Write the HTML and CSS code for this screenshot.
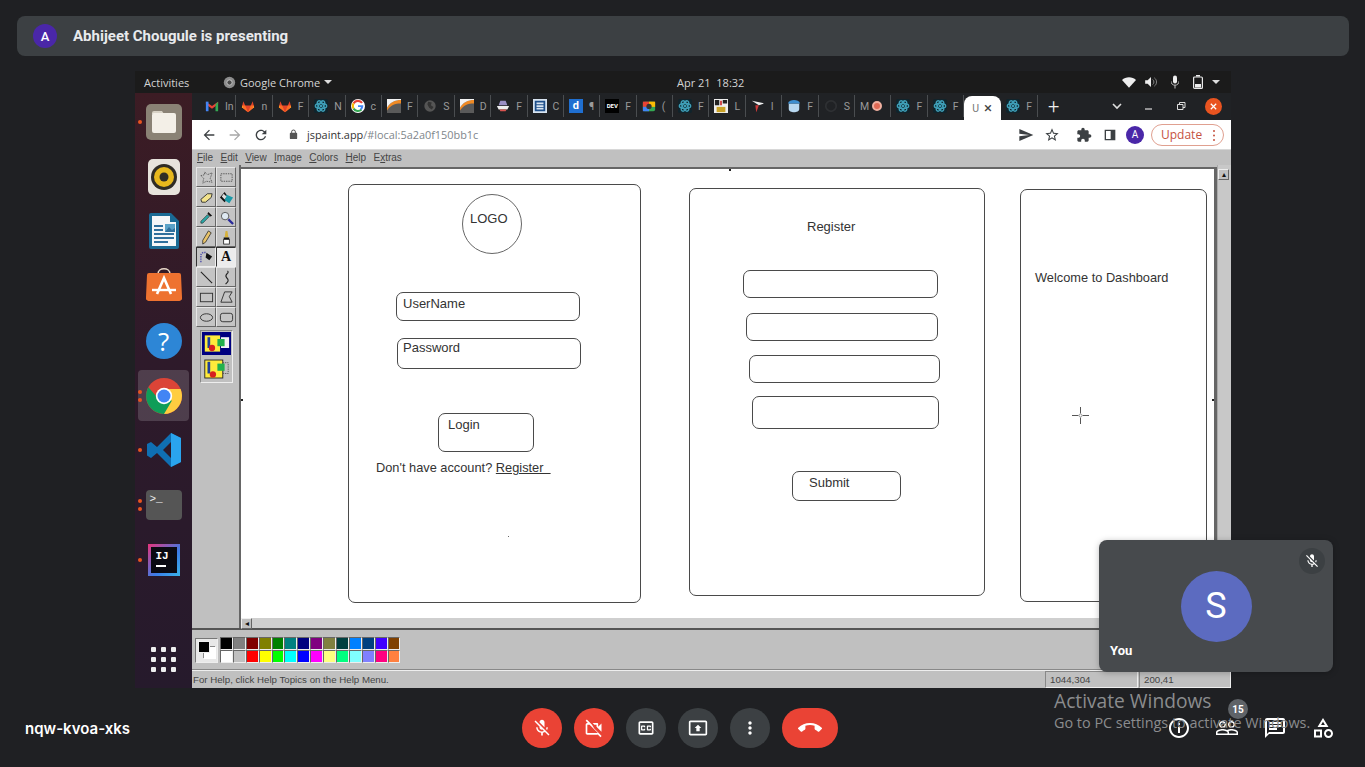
FILE: index.html
```html
<!DOCTYPE html>
<html lang="en">
<head>
<meta charset="utf-8">
<title>Meet</title>
<link rel="stylesheet" href="styles.css">
</head>
<body>
<svg class="sprite" aria-hidden="true">
  <symbol id="i-mic-off" viewBox="0 0 24 24"><path d="M19 11h-1.7c0 .74-.16 1.43-.43 2.05l1.23 1.23c.56-.98.9-2.09.9-3.28zm-4.02.17c0-.06.02-.11.02-.17V5c0-1.66-1.34-3-3-3S9 3.34 9 5v.18l5.98 5.99zM4.27 3L3 4.27l6.01 6.01V11c0 1.66 1.33 3 2.99 3 .22 0 .44-.03.65-.08l1.66 1.66c-.71.33-1.5.52-2.31.52-2.76 0-5.3-2.1-5.3-5.1H5c0 3.41 2.72 6.23 6 6.72V21h2v-3.28c.91-.13 1.77-.45 2.54-.9L19.73 21 21 19.73 4.27 3z"/></symbol>
  <symbol id="i-atom" viewBox="0 0 16 16"><rect width="16" height="16" rx="2" fill="#10242c"/><g fill="none" stroke="#3f9fb8" stroke-width="1.600"><ellipse cx="8" cy="8" rx="6.500" ry="2.800"/><ellipse cx="8" cy="8" rx="6.500" ry="2.800" transform="rotate(60 8 8)"/><ellipse cx="8" cy="8" rx="6.500" ry="2.800" transform="rotate(120 8 8)"/></g><circle cx="8" cy="8" r="1.400" fill="#3f9fb8"/></symbol>
  <symbol id="i-gitlab" viewBox="0 0 16 16"><path fill="#e24329" d="M8 15L1 9.500l1.600-7 2.200 5h6.400l2.200-5 1.600 7z"/><path fill="#fc6d26" d="M8 15L4.800 7.500H1.300L1 9.500zM8 15l3.200-7.500h3.500l.3 2z"/><path fill="#fca326" d="M1.300 7.500L1 9.500l2 1.600zM14.700 7.500l.3 2-2 1.600z"/></symbol>
  <symbol id="i-pen" viewBox="0 0 16 16"><rect width="16" height="16" fill="#5a5a5a"/><path fill="#f08a24" d="M0 10C3 4 9 1 16 1v4C9 5 4 7 0 13z"/><path fill="#f3f3f3" d="M0 0h16v1C9 1 3 4 0 10z"/></symbol>
</svg>

<div class="meet">
  <header class="banner">
    <span class="banner-avatar">A</span>
    <span class="banner-text">Abhijeet Chougule is presenting</span>
  </header>

  <main class="stage">
    <section class="desktop">
      <div class="topbar">
        <div class="topbar-left">
          <span class="activities">Activities</span>
          <svg class="tb-chrome" viewBox="0 0 16 16"><circle cx="8" cy="8" r="7" fill="#8d8d8d"/><circle cx="8" cy="8" r="3.200" fill="#4a4a4a" stroke="#d0d0d0"/></svg>
          <span class="appname">Google Chrome</span>
          <span class="caret"></span>
        </div>
        <div class="clock">Apr 21&nbsp;&nbsp;18:32</div>
        <div class="tray">
          <svg class="tray-wifi" viewBox="0 0 16 12"><path d="M0 3C4-1 12-1 16 3l-8 9z"/></svg>
          <svg class="tray-vol" viewBox="0 0 14 12"><path d="M0 4h3l4-4v12L3 8H0z"/><path d="M9 3c2 1.500 2 4.500 0 6M11 1c3.500 2.500 3.500 7.500 0 10" fill="none" stroke="#999"/></svg>
          <svg class="tray-mic" viewBox="0 0 10 16"><rect x="2.500" width="5" height="10" rx="2.500"/><path d="M0 7c0 3 2 5 5 5s5-2 5-5" fill="none" stroke="#ddd"/><path d="M4.500 12h1v4h-1z"/></svg>
          <svg class="tray-bat" viewBox="0 0 10 14"><path d="M3 0h4v1.500H3z"/><rect x=".6" y="2" width="8.800" height="11.400" fill="none" stroke="#e8e8e8" stroke-width="1.200" rx="1"/><rect x="2" y="9" width="6" height="3.500"/></svg>
          <span class="caret"></span>
        </div>
      </div>

      <div class="desk-body">
        <nav class="dock">
          <div class="dock-slot slot-files"><span class="pip"></span>
            <svg class="d-files" viewBox="0 0 36 36"><rect width="36" height="36" rx="5" fill="#8a8275"/><path fill="#d8d2c6" d="M6 9a2 2 0 0 1 2-2h8l2 3h-12z"/><rect x="6" y="9" width="24" height="20" rx="2" fill="#f3efe7"/></svg>
          </div>
          <div class="dock-slot slot-rhythm">
            <svg class="d-rhythm" viewBox="0 0 32 36"><rect width="32" height="36" rx="5" fill="#e7e3dc"/><circle cx="16" cy="18" r="13" fill="#2f2c25"/><circle cx="16" cy="18" r="10" fill="#e7b81d"/><circle cx="16" cy="18" r="4.500" fill="#2f2c25"/></svg>
          </div>
          <div class="dock-slot slot-writer">
            <svg class="d-writer" viewBox="0 0 30 36"><path fill="#1a6a94" d="M2 0h20l8 8v26a2 2 0 0 1-2 2H2a2 2 0 0 1-2-2V2a2 2 0 0 1 2-2z"/><path fill="#f4f6f8" d="M3 3h18v6h6v24H3z"/><path fill="#1a6a94" d="M22 2l6 6h-6z"/><path fill="#2f6f9c" d="M5 12h9v2H5zM5 16h9v2H5zM5 20h20v2H5zM5 24h20v2H5zM5 28h14v2H5z"/><path fill="#5aa2c8" d="M16 11h10v8H16z"/><path fill="#2f6f9c" d="M16 19l4-5 3 3 3-2v4z"/></svg>
          </div>
          <div class="dock-slot slot-store">
            <svg class="d-store" viewBox="0 0 36 34"><path fill="none" stroke="#e8d8c8" stroke-width="1.600" d="M12 7c0-7 12-7 12 0"/><path fill="#ee7230" d="M3 6h30a2 2 0 0 1 2 2l1 22a3 3 0 0 1-3 4H3a3 3 0 0 1-3-4l1-22a2 2 0 0 1 2-2z"/><path fill="none" stroke="#fff" stroke-width="2.600" d="M11 27l7-16 7 16"/><path fill="none" stroke="#fff" stroke-width="2.400" d="M6 23h24"/></svg>
          </div>
          <div class="dock-slot slot-help"><span class="help-circle">?</span></div>
          <div class="dock-slot slot-chrome"><span class="pip pip-up"></span><span class="pip pip-down"></span>
            <svg class="d-chrome" viewBox="0 0 36 36"><circle cx="18" cy="18" r="18" fill="#db4437"/><path fill="#ffcd40" d="M18 36c10 0 18-8 18-18 0-2.500-.5-4.800-1.400-7H18z"/><path fill="#0f9d58" d="M2.400 9.200A18 18 0 0 0 18 36l8-13.500H14z"/><circle cx="18" cy="18" r="8.200" fill="#fff"/><circle cx="18" cy="18" r="6.500" fill="#4285f4"/></svg>
          </div>
          <div class="dock-slot slot-code"><span class="pip"></span>
            <svg class="d-code" viewBox="0 0 34 34"><path fill="#0f6fb3" d="M24 0l10 5v24l-10 5-14-14-6 5-4-2.500V11L4 9l6 5zM24 9l-8 8 8 8z"/><path fill="#2aa4ee" d="M24 0l10 5v24l-10 5zM24 9v16z"/></svg>
          </div>
          <div class="dock-slot slot-term"><span class="pip pip-up"></span><span class="pip pip-down"></span>
            <div class="d-term">&gt;_</div>
          </div>
          <div class="dock-slot slot-ij"><span class="pip"></span>
            <div class="d-ij"><div class="ij-inner"><span>IJ</span><i></i></div></div>
          </div>
          <div class="dock-grid">
            <span></span><span></span><span></span><span></span><span></span><span></span><span></span><span></span><span></span>
          </div>
        </nav>

        <div class="browser">
          <div class="tabstrip">
            <div class="tab"><svg class="fav" viewBox="0 0 16 16"><path fill="#ea4335" d="M1 3l7 5 7-5v3l-7 5-7-5z"/><path fill="#4285f4" d="M1 3h3v11H1z"/><path fill="#34a853" d="M12 6l3-3v11h-3z"/></svg><span>In</span></div>
            <div class="tab"><svg class="fav"><use href="#i-gitlab"/></svg><span>n</span></div>
            <div class="tab"><svg class="fav"><use href="#i-gitlab"/></svg><span>F</span></div>
            <div class="tab"><svg class="fav"><use href="#i-atom"/></svg><span>N</span></div>
            <div class="tab"><svg class="fav" viewBox="0 0 16 16"><circle cx="8" cy="8" r="8" fill="#fff"/><path d="M12.700 4.500A5.800 5.800 0 0 0 3 5" fill="none" stroke="#ea4335" stroke-width="2.400"/><path d="M3 5a5.800 5.800 0 0 0 0 6" fill="none" stroke="#fbbc05" stroke-width="2.400"/><path d="M3 11a5.800 5.800 0 0 0 9 1" fill="none" stroke="#34a853" stroke-width="2.400"/><path fill="#4285f4" d="M8 7h6c.2 2-.5 4-2 5.500L10.300 11c.6-.5 1-1.100 1.100-1.900H8z"/></svg><span>c</span></div>
            <div class="tab"><svg class="fav"><use href="#i-pen"/></svg><span>F</span></div>
            <div class="tab"><svg class="fav" viewBox="0 0 16 16"><circle cx="8" cy="8" r="6.500" fill="#555"/><path fill="#333" d="M6 3l4 1-1 3 3 2-2 3-3-2-2-4z"/></svg><span>S</span></div>
            <div class="tab"><svg class="fav"><use href="#i-pen"/></svg><span>D</span></div>
            <div class="tab"><svg class="fav" viewBox="0 0 16 16"><path fill="#9a8fc4" d="M5 2h6l2 5H3z"/><path fill="#eee" d="M1 8h14l-2 4H3z"/><path fill="#d9534f" d="M4 12h8l-1 2H5z"/></svg><span>F</span></div>
            <div class="tab"><svg class="fav" viewBox="0 0 16 16"><rect width="16" height="16" fill="#d8e4f0"/><path fill="#1e4f8a" d="M2 2h12v12H2zM4 4v2h8V4zM4 7v2h8V7zM4 10v2h8v-2z"/></svg><span>C</span></div>
            <div class="tab"><span class="fav fav-d">d</span><span>¶</span></div>
            <div class="tab"><span class="fav fav-dev">DEV</span><span>F</span></div>
            <div class="tab"><svg class="fav" viewBox="0 0 16 16"><rect x="1" y="3" width="14" height="11" rx="2" fill="#34a853"/><rect x="1" y="3" width="7" height="6" fill="#ea4335"/><rect x="8" y="3" width="7" height="6" fill="#fbbc05"/><rect x="1" y="9" width="7" height="5" fill="#4285f4"/><circle cx="8" cy="8.500" r="3" fill="#333"/></svg><span>(</span></div>
            <div class="tab"><svg class="fav"><use href="#i-atom"/></svg><span>F</span></div>
            <div class="tab"><svg class="fav" viewBox="0 0 16 16"><rect width="16" height="16" fill="#eee"/><path fill="#222" d="M1 1h5v6H1zM10 1h5v4h-5z"/><path fill="#c33" d="M7 2h2v5H7z"/><path fill="#c9a227" d="M3 9h10v6H3z"/></svg><span>L</span></div>
            <div class="tab"><svg class="fav" viewBox="0 0 16 16"><path fill="#eee" d="M1 2l14 3-6 2z"/><path fill="#d03a3a" d="M9 7l-3 8-1-8z"/></svg><span>I</span></div>
            <div class="tab"><svg class="fav" viewBox="0 0 16 16"><path fill="#b8d8f0" d="M2 5h12v6c0 3-3 4-6 4s-6-1-6-4z"/><path fill="#3d8fd1" d="M1 5c2-5 12-5 14 0z"/></svg><span>F</span></div>
            <div class="tab"><svg class="fav" viewBox="0 0 16 16"><circle cx="8" cy="8" r="6" fill="none" stroke="#2e3033" stroke-width="2"/></svg><span>S</span></div>
            <div class="tab tab-rec"><span>M</span><i class="rec"></i></div>
            <div class="tab"><svg class="fav"><use href="#i-atom"/></svg><span>F</span></div>
            <div class="tab"><svg class="fav"><use href="#i-atom"/></svg><span>F</span></div>
            <div class="tab tab-active"><span>U</span><b>×</b></div>
            <div class="tab"><svg class="fav"><use href="#i-atom"/></svg><span>F</span></div>
            <div class="newtab">+</div>
            <div class="winctl">
              <svg class="wc" viewBox="0 0 12 12"><path d="M2 4l4 4 4-4" fill="none" stroke="#ddd" stroke-width="1.600"/></svg>
              <svg class="wc" viewBox="0 0 12 12"><path d="M2 9h7" stroke="#ddd" stroke-width="1.200"/></svg>
              <svg class="wc" viewBox="0 0 12 12"><path d="M2.500 4.500h5.500v5H2.500zM4.500 4.500v-2H10v5H8" fill="none" stroke="#ddd"/></svg>
              <span class="wc-close"><svg viewBox="0 0 10 10"><path d="M2 2l6 6M8 2l-6 6" stroke="#fff" stroke-width="1.400"/></svg></span>
            </div>
          </div>

          <div class="toolbar">
            <svg class="tbi tbi-dark" viewBox="0 0 24 24"><path d="M20 11H7.830l5.590-5.590L12 4l-8 8 8 8 1.410-1.410L7.830 13H20v-2z"/></svg>
            <svg class="tbi tbi-off" viewBox="0 0 24 24"><path d="M12 4l-1.410 1.410L16.170 11H4v2h12.170l-5.580 5.590L12 20l8-8z"/></svg>
            <svg class="tbi tbi-dark" viewBox="0 0 24 24"><path d="M17.650 6.350C16.200 4.900 14.210 4 12 4c-4.420 0-7.990 3.580-7.990 8s3.570 8 7.990 8c3.730 0 6.840-2.550 7.730-6h-2.080c-.82 2.330-3.040 4-5.650 4-3.310 0-6-2.690-6-6s2.690-6 6-6c1.660 0 3.140.69 4.220 1.780L13 11h7V4l-2.350 2.350z"/></svg>
            <svg class="lock" viewBox="0 0 24 24"><path d="M18 8h-1V6c0-2.760-2.240-5-5-5S7 3.240 7 6v2H6c-1.100 0-2 .9-2 2v10c0 1.100.9 2 2 2h12c1.100 0 2-.9 2-2V10c0-1.100-.9-2-2-2zM9 6c0-1.660 1.340-3 3-3s3 1.340 3 3v2H9V6z"/></svg>
            <div class="url"><span>jspaint.app</span>/#local:5a2a0f150bb1c</div>
            <div class="tool-right">
              <svg class="tbi tbi-dark" viewBox="0 0 24 24"><path d="M2.010 21L23 12 2.010 3 2 10l15 2-15 2z"/></svg>
              <svg class="tbi tbi-dark" viewBox="0 0 24 24"><path d="M22 9.240l-7.190-.62L12 2 9.190 8.630 2 9.240l5.460 4.730L5.820 21 12 17.270 18.180 21l-1.630-7.030L22 9.240zM12 15.400l-3.760 2.270 1-4.280-3.320-2.880 4.380-.38L12 6.100l1.710 4.040 4.380.38-3.320 2.880 1 4.280L12 15.400z"/></svg>
              <svg class="tbi tbi-dark tbi-gap" viewBox="0 0 24 24"><path d="M20.500 11H19V7c0-1.100-.9-2-2-2h-4V3.500C13 2.120 11.880 1 10.500 1S8 2.120 8 3.500V5H4c-1.100 0-1.990.9-1.990 2v3.800H3.500c1.490 0 2.700 1.210 2.700 2.700s-1.210 2.700-2.700 2.700H2V20c0 1.100.9 2 2 2h3.800v-1.500c0-1.490 1.210-2.700 2.700-2.700 1.490 0 2.700 1.210 2.700 2.700V22H17c1.100 0 2-.9 2-2v-4h1.500c1.380 0 2.500-1.120 2.500-2.500S21.880 11 20.500 11z"/></svg>
              <svg class="tbi tbi-dark" viewBox="0 0 24 24"><path d="M4 4h16v16H4zM6 6v12h7V6z"/></svg>
              <span class="profile">A</span>
              <span class="update">Update<i></i></span>
            </div>
          </div>

          <div class="paint">
            <div class="menubar">
              <span><u>F</u>ile</span><span><u>E</u>dit</span><span><u>V</u>iew</span><span><u>I</u>mage</span><span><u>C</u>olors</span><span><u>H</u>elp</span><span>E<u>x</u>tras</span>
            </div>
            <div class="workspace">
              <aside class="toolbox">
                <div class="tools">
                  <div class="tool"><svg viewBox="0 0 16 16"><path class="dash" d="M6 2l3 3 5-2-2 6 2 4-6-1-4 2 1-5-3-3 4-1z"/></svg></div>
                  <div class="tool"><svg viewBox="0 0 16 16"><rect class="dash" x="2" y="4" width="12" height="8"/></svg></div>
                  <div class="tool"><svg viewBox="0 0 16 16"><path fill="#f2e28c" stroke="#333" d="M2 10l7-6h5l-1 4-6 5H3z"/></svg></div>
                  <div class="tool"><svg viewBox="0 0 16 16"><path fill="#111" d="M6 2L1 8l5 5 4-5z"/><path fill="#1b9aa8" d="M8 5l7 3-4 6-5-3z"/><path fill="#ddd" d="M5 4l3 3-2 3-3-3z"/></svg></div>
                  <div class="tool"><svg viewBox="0 0 16 16"><path fill="#111" d="M10 2l4 4-2 1-3-3z"/><path fill="#2aa6a6" stroke="#222" stroke-width=".6" d="M9 5l2 2-7 7-2 0 0-2z"/></svg></div>
                  <div class="tool"><svg viewBox="0 0 16 16"><circle cx="6.500" cy="6.500" r="4" fill="#dfe9f2" stroke="#555"/><path stroke="#2a2a9a" stroke-width="2.400" d="M10 10l5 5"/></svg></div>
                  <div class="tool"><svg viewBox="0 0 16 16"><path fill="#e9c46a" stroke="#222" stroke-width=".8" d="M10 1l3 2-6 10-3 2 0-4z"/></svg></div>
                  <div class="tool"><svg viewBox="0 0 16 16"><path fill="#d6b13a" d="M7 1h2l1 7H6z"/><rect x="5" y="8" width="6" height="2" fill="#111"/><rect x="5" y="10" width="6" height="5" fill="#fff" stroke="#111" stroke-width=".8"/></svg></div>
                  <div class="tool tool-sunk"><svg viewBox="0 0 16 16"><path fill="none" stroke="#55a" stroke-width="1.600" stroke-dasharray="1.500 1" d="M2 13V6c0-3 3-4 6-3"/><path fill="#111" d="M8 3l6 4-3 4-4-3z"/></svg></div>
                  <div class="tool tool-on"><span>A</span></div>
                  <div class="tool"><svg viewBox="0 0 16 16"><path stroke="#222" stroke-width="1.200" d="M2 2l12 12"/></svg></div>
                  <div class="tool"><svg viewBox="0 0 16 16"><path fill="none" stroke="#222" stroke-width="1.200" d="M9 1c3 2-4 4-1 7s2 4-1 7"/></svg></div>
                  <div class="tool"><svg viewBox="0 0 16 16"><rect x="1.500" y="3.500" width="13" height="9" class="ol"/></svg></div>
                  <div class="tool"><svg viewBox="0 0 16 16"><path class="ol" d="M6 2h8l-3 5 3 6H2z"/></svg></div>
                  <div class="tool"><svg viewBox="0 0 16 16"><ellipse cx="8" cy="8" rx="6.500" ry="4" class="ol"/></svg></div>
                  <div class="tool"><svg viewBox="0 0 16 16"><rect x="1.500" y="3.500" width="13" height="9" rx="2.500" class="ol"/></svg></div>
                </div>
                <div class="options">
                  <div class="opt opt-sel"><svg viewBox="0 0 30 20"><rect x="2" y="1" width="17" height="18" fill="#ffeb3b"/><path fill="#1e3f9a" d="M5 3h3v12H5z"/><circle cx="10" cy="15" r="3.500" fill="#d62020"/><rect x="20" y="3" width="9" height="12" fill="#f4f4f4"/><rect x="16" y="5" width="8" height="8" fill="#22b14c"/></svg></div>
                  <div class="opt"><svg viewBox="0 0 30 24"><rect x="2" y="2" width="20" height="20" fill="#ffeb3b" stroke="#222"/><path fill="#1e3f9a" d="M5 4h3v13H5z"/><circle cx="11" cy="18" r="3.500" fill="#d62020"/><rect x="22" y="5" width="6" height="12" class="dash"/><rect x="16" y="6" width="8" height="8" fill="#22b14c"/></svg></div>
                </div>
              </aside>
              <div class="canvas-wrap">
                <div class="canvas-row">
                  <div class="canvas">
                    <div class="sk card-login"></div>
                    <div class="sk logo">LOGO</div>
                    <div class="sk field f-user">UserName</div>
                    <div class="sk field f-pass">Password</div>
                    <div class="sk field f-login">Login</div>
                    <div class="sk-text t-note">Don't have account? <span>Register&nbsp;&nbsp;</span></div>
                    <i class="speck"></i>
                    <div class="sk card-reg"></div>
                    <div class="sk-text t-reg">Register</div>
                    <div class="sk field r1"></div>
                    <div class="sk field r2"></div>
                    <div class="sk field r3"></div>
                    <div class="sk field r4"></div>
                    <div class="sk field r-submit">Submit</div>
                    <div class="sk card-dash"></div>
                    <div class="sk-text t-dash">Welcome to Dashboard</div>
                    <svg class="cross" viewBox="0 0 17 17"><path d="M8.500 0v6.500M8.500 10.500V17M0 8.500h6.500M10.500 8.500H17" stroke="#555"/><circle cx="8.500" cy="8.500" r="1.500" fill="none" stroke="#999"/></svg>
                    <i class="handle h-top"></i><i class="handle h-left"></i><i class="handle h-right"></i>
                  </div>
                </div>
                <div class="hscroll"><span class="arrow-btn">◂</span></div>
              </div>
              <div class="vscroll"><span class="arrow-btn">▴</span></div>
            </div>
            <div class="palette">
              <div class="current"><i class="cur-bg"></i><i class="cur-fg"></i></div>
              <div class="swatches">
                <i class="k000"></i><i class="k808"></i><i class="k800"></i><i class="k880"></i><i class="k080"></i><i class="k088"></i><i class="k008"></i><i class="k818"></i><i class="k884"></i><i class="k044"></i><i class="k08f"></i><i class="k048"></i><i class="k40f"></i><i class="k840"></i>
                <i class="kfff"></i><i class="kccc"></i><i class="kf00"></i><i class="kff0"></i><i class="k0f0"></i><i class="k0ff"></i><i class="k00f"></i><i class="kf0f"></i><i class="kff8"></i><i class="k0f8"></i><i class="k8ff"></i><i class="k88f"></i><i class="kf08"></i><i class="kf84"></i>
              </div>
            </div>
            <div class="status">
              <span class="st-help">For Help, click Help Topics on the Help Menu.</span>
              <span class="st-pos">1044,304</span>
              <span class="st-size">200,41</span>
            </div>
          </div>
        </div>
      </div>
    </section>
  </main>

  <footer class="bottombar">
    <div class="meeting-code">nqw-kvoa-xks</div>
    <div class="controls">
      <button class="ctl ctl-red"><svg viewBox="0 0 24 24"><use href="#i-mic-off"/></svg></button>
      <button class="ctl ctl-red"><svg viewBox="0 0 24 24"><path d="M9.560 8l-2-2-4.150-4.140L2 3.270 4.730 6H4c-1.100 0-2 .9-2 2v10c0 1.100.9 2 2 2h12c.21 0 .39-.08.55-.18L19.730 23l1.410-1.410-8.860-8.860L9.560 8zM4 18V8h2.730l10 10H4zm11-10v2.610l6 6V6.500l-4 4V7c0-.55-.45-1-1-1h-5.610l2 2H15z"/></svg></button>
      <button class="ctl"><svg viewBox="0 0 24 24"><path d="M19 4H5c-1.110 0-2 .9-2 2v12c0 1.100.89 2 2 2h14c1.100 0 2-.9 2-2V6c0-1.100-.9-2-2-2zm0 14H5V6h14v12zM7 15h3c.55 0 1-.45 1-1v-1H9.500v.5h-2v-3h2v.5H11v-1c0-.55-.45-1-1-1H7c-.55 0-1 .45-1 1v4c0 .55.45 1 1 1zm7 0h3c.55 0 1-.45 1-1v-1h-1.500v.5h-2v-3h2v.5H18v-1c0-.55-.45-1-1-1h-3c-.55 0-1 .45-1 1v4c0 .55.45 1 1 1z"/></svg></button>
      <button class="ctl"><svg viewBox="0 0 24 24"><path d="M21 3H3c-1.110 0-2 .89-2 2v14c0 1.110.89 2 2 2h18c1.110 0 2-.89 2-2V5c0-1.110-.89-2-2-2zm0 16.020H3V4.980h18v14.040zM10 12H8l4-4 4 4h-2v4h-4v-4z"/></svg></button>
      <button class="ctl"><svg viewBox="0 0 24 24"><path d="M12 8c1.100 0 2-.9 2-2s-.9-2-2-2-2 .9-2 2 .9 2 2 2zm0 2c-1.100 0-2 .9-2 2s.9 2 2 2 2-.9 2-2-.9-2-2-2zm0 6c-1.100 0-2 .9-2 2s.9 2 2 2 2-.9 2-2-.9-2-2-2z"/></svg></button>
      <button class="ctl ctl-red ctl-end"><svg viewBox="0 0 24 24"><path d="M12 9c-1.600 0-3.150.25-4.600.72v3.100c0 .39-.23.74-.56.9-.98.49-1.870 1.120-2.660 1.850-.18.18-.43.28-.7.28-.28 0-.53-.11-.71-.29L.29 13.080c-.18-.17-.29-.42-.29-.7 0-.28.11-.53.29-.71C3.340 8.780 7.460 7 12 7s8.660 1.780 11.710 4.670c.18.18.29.43.29.71 0 .28-.11.53-.29.71l-2.480 2.480c-.18.18-.43.29-.71.29-.27 0-.52-.11-.7-.28-.79-.74-1.690-1.360-2.670-1.850-.33-.16-.56-.5-.56-.9v-3.100C15.150 9.250 13.600 9 12 9z"/></svg></button>
    </div>
    <div class="side-icons">
      <svg viewBox="0 0 24 24"><path d="M11 7h2v2h-2zm0 4h2v6h-2zm1-9C6.480 2 2 6.480 2 12s4.480 10 10 10 10-4.480 10-10S17.520 2 12 2zm0 18c-4.410 0-8-3.590-8-8s3.590-8 8-8 8 3.590 8 8-3.590 8-8 8z"/></svg>
      <svg viewBox="0 0 24 24"><path d="M16.500 13c-1.200 0-3.070.34-4.500 1-1.430-.67-3.300-1-4.500-1C5.330 13 1 14.080 1 16.250V19h22v-2.750c0-2.170-4.330-3.250-6.500-3.250zm-4 4.500h-10v-1.250c0-.54 2.560-1.750 5-1.750s5 1.210 5 1.750v1.250zm9 0H14v-1.250c0-.46-.2-.86-.52-1.220.88-.3 1.960-.53 3.020-.53 2.440 0 5 1.210 5 1.750v1.250zM7.500 12c1.930 0 3.500-1.570 3.500-3.500S9.430 5 7.500 5 4 6.570 4 8.500 5.570 12 7.500 12zm0-5.500c1.100 0 2 .9 2 2s-.9 2-2 2-2-.9-2-2 .9-2 2-2zm9 5.500c1.930 0 3.500-1.570 3.500-3.500S18.430 5 16.500 5 13 6.570 13 8.500s1.570 3.500 3.500 3.500zm0-5.500c1.100 0 2 .9 2 2s-.9 2-2 2-2-.9-2-2 .9-2 2-2z"/></svg>
      <svg viewBox="0 0 24 24"><path d="M20 2H4c-1.100 0-2 .9-2 2v18l4-4h14c1.100 0 2-.9 2-2V4c0-1.100-.9-2-2-2zm0 14H6l-2 2V4h16v12zM6 12h8v2H6zm0-3h12v2H6zm0-3h12v2H6z"/></svg>
      <svg viewBox="0 0 24 24"><path d="M12 2l-5.500 9h11L12 2zm0 3.840L13.930 9h-3.870L12 5.840zM17.500 13c-2.490 0-4.500 2.010-4.500 4.500s2.010 4.500 4.500 4.500 4.500-2.010 4.500-4.500-2.010-4.500-4.500-4.500zm0 7c-1.380 0-2.500-1.120-2.500-2.500s1.120-2.500 2.500-2.500 2.500 1.120 2.500 2.500-1.120 2.500-2.500 2.500zM3 21.500h8v-8H3v8zm2-6h4v4H5v-4z"/></svg>
    </div>
  </footer>

  <aside class="selfview">
    <button class="self-mic"><svg viewBox="0 0 24 24"><use href="#i-mic-off"/></svg></button>
    <div class="self-avatar">S</div>
    <div class="self-name">You</div>
  </aside>

  <div class="activate">
    <div class="act-title">Activate Windows</div>
    <div class="act-sub">Go to PC settings to activate Windows.</div>
  </div>
  <span class="badge">15</span>
</div>
</body>
</html>
```
FILE: styles.css
```css
* { box-sizing: border-box; }
html, body { margin: 0; padding: 0; }
body { background: #202124; font-family: Roboto, "Liberation Sans", sans-serif; overflow: hidden; }
.sprite { display: none; }
svg { display: block; }

.meet { position: relative; width: 1365px; height: 767px; display: flex; flex-direction: column; background: #1f2023; overflow: hidden; }

/* banner */
.banner { margin: 16px 16px 0 17px; height: 40px; flex: none; display: flex; align-items: center; padding-left: 16px; background: #3c4043; border-radius: 8px; }
.banner-avatar { width: 24px; height: 24px; border-radius: 50%; background: #4a27a8; color: #fff; font-size: 13px; font-weight: 500; display: flex; align-items: center; justify-content: center; }
.banner-text { margin-left: 16px; color: #e8eaed; font-size: 15px; font-weight: 700; }

/* stage */
.stage { flex: none; height: 632px; padding: 15px 134px 0 135px; }
.desktop { width: 1096px; height: 617px; display: flex; flex-direction: column; background: #111; }

.topbar { height: 22px; flex: none; background: #1b1b1b; color: #d4d4d4; font-family: "Open Sans", sans-serif; font-size: 11px; display: flex; align-items: center; }
.topbar-left { width: 542px; display: flex; align-items: center; padding-left: 9px; flex: none; }
.activities { width: 79px; }
.tb-chrome { width: 13px; height: 13px; }
.appname { margin-left: 4px; }
.caret { display: inline-block; width: 0; height: 0; border-left: 4px solid transparent; border-right: 4px solid transparent; border-top: 4px solid #ddd; margin-left: 4px; }
.clock { width: 310px; flex: none; }
.tray { display: flex; align-items: center; margin-left: 135px; }
.tray svg { fill: #eee; }
.tray-wifi { width: 14px; height: 11px; }
.tray-vol { width: 12px; height: 10px; margin-left: 9px; }
.tray-mic { width: 8px; height: 14px; margin-left: 14px; }
.tray-bat { width: 10px; height: 14px; margin-left: 14px; }
.tray .caret { margin-left: 9px; }

.desk-body { flex: 1; display: flex; min-height: 0; }

/* dock */
.dock { width: 57px; flex: none; background: linear-gradient(#3c1c24, #2e1a2a 45%, #261a2c); display: flex; flex-direction: column; align-items: center; position: relative; }
.dock-slot { position: relative; display: flex; align-items: center; justify-content: center; width: 57px; flex: none; }
.slot-files { height: 36px; margin-top: 11px; }
.slot-rhythm { height: 36px; margin-top: 19px; }
.slot-writer { height: 36px; margin-top: 18px; }
.slot-store { height: 34px; margin-top: 18px; }
.slot-help { height: 36px; margin-top: 22px; }
.slot-chrome { height: 51px; margin-top: 11px; }
.slot-code { height: 34px; margin-top: 12px; }
.slot-term { height: 30px; margin-top: 23px; }
.slot-ij { height: 32px; margin-top: 24px; }
.slot-chrome::before { content: ""; position: absolute; left: 3px; top: 0; width: 51px; height: 51px; border-radius: 4px; background: rgba(255,255,255,.16); }
.pip { position: absolute; left: 3px; top: 50%; width: 4px; height: 4px; margin-top: -2px; border-radius: 50%; background: #e95420; }
.pip-up { margin-top: -6px; }
.pip-down { margin-top: 2px; }
.d-files { width: 36px; height: 36px; }
.d-rhythm { width: 32px; height: 36px; }
.d-writer { width: 30px; height: 36px; }
.d-store { width: 36px; height: 34px; }
.help-circle { width: 36px; height: 36px; border-radius: 50%; background: #2d86d6; color: #fff; font-size: 26px; display: flex; align-items: center; justify-content: center; font-family: "Open Sans", sans-serif; }
.d-chrome { width: 36px; height: 36px; position: relative; }
.d-code { width: 34px; height: 34px; }
.d-term { width: 36px; height: 30px; background: #555; border-radius: 4px; color: #eee; font-family: "Liberation Mono", monospace; font-size: 11px; line-height: 12px; padding: 3px 0 0 4px; }
.d-ij { width: 32px; height: 32px; padding: 3px; background: linear-gradient(135deg, #e8337a, #3a7de8 60%, #3ab5e8); }
.ij-inner { width: 26px; height: 26px; background: #0a0a12; color: #fff; font-family: "Liberation Mono", monospace; font-size: 11px; font-weight: 700; line-height: 12px; padding: 3px 0 0 5px; }
.ij-inner span { display: block; }
.ij-inner i { display: block; width: 10px; height: 2px; background: #fff; margin-top: 3px; }
.dock-grid { position: absolute; left: 16px; top: 554px; display: grid; grid-template-columns: repeat(3, 5px); gap: 5px; }
.dock-grid span { width: 5px; height: 5px; background: #eee; border-radius: 1px; }

/* browser */
.browser { flex: 1; min-width: 0; display: flex; flex-direction: column; }
.tabstrip { height: 27px; flex: none; background: #202225; display: flex; align-items: flex-end; padding-left: 8px; color: #9a9a9a; font-size: 10.500px; }
.tab { width: 36.400px; height: 22px; margin-bottom: 3px; flex: none; display: flex; align-items: center; padding-left: 5px; gap: 6px; border-right: 1px solid #4a4d50; overflow: hidden; white-space: nowrap; }
.fav { width: 14px; height: 14px; flex: none; }
.fav-d { background: #1f6fd1; color: #fff; font-weight: 700; font-size: 11px; text-align: center; line-height: 14px; }
.fav-dev { background: #000; color: #fff; font-size: 6px; font-weight: 700; text-align: center; line-height: 14px; }
.tab-rec { gap: 3px; }
.rec { width: 10px; height: 10px; border-radius: 50%; background: #e06a55; border: 2px solid #f0b0a0; flex: none; }
.tab-active { height: 24px; margin-bottom: 0; background: #fff; border: 0; border-radius: 8px 8px 0 0; color: #777; width: 37px; padding-left: 8px; gap: 5px; }
.tab-active b { color: #444; font-weight: 400; font-size: 15px; }
.newtab { width: 32px; height: 22px; margin-bottom: 3px; color: #eee; font-size: 20px; font-weight: 300; line-height: 22px; text-align: center; }
.winctl { margin-left: auto; margin-bottom: 3px; display: flex; align-items: center; height: 22px; padding-right: 2px; }
.wc { width: 12px; height: 12px; margin: 0 10px; }
.wc-close { width: 17px; height: 17px; margin: 0 7px 0 8px; border-radius: 50%; background: #e95420; display: flex; align-items: center; justify-content: center; }
.wc-close svg { width: 9px; height: 9px; }

.toolbar { height: 30px; flex: none; background: #fff; display: flex; align-items: center; padding: 0 7px 0 4px; border-bottom: 1px solid #d8d8d8; }
.tbi { width: 16px; height: 16px; margin: 0 5px; flex: none; }
.tbi-dark { fill: #3c4043; }
.tbi-off { fill: #a8a8a8; }
.lock { width: 11px; height: 11px; fill: #555; margin-left: 14px; flex: none; }
.url { margin-left: 8px; font-size: 10.900px; color: #80868b; font-family: "Open Sans", sans-serif; }
.url span { color: #333; }
.tool-right { margin-left: auto; display: flex; align-items: center; }
.tool-right .tbi { margin: 0 5px; }
.tool-right .tbi-gap { margin-left: 11px; }
.profile { width: 18px; height: 18px; margin-left: 3px; border-radius: 50%; background: #4a27a8; color: #fff; font-size: 10px; display: flex; align-items: center; justify-content: center; }
.update { margin-left: 7px; width: 73px; height: 22px; border: 1px solid #e0a090; border-radius: 11px; color: #c5523f; font-size: 12px; font-family: "Open Sans", sans-serif; display: flex; align-items: center; padding-left: 9px; position: relative; }
.update i { position: absolute; right: 8px; top: 5px; width: 2.500px; height: 2.500px; background: #c5523f; border-radius: 50%; box-shadow: 0 4.500px #c5523f, 0 9px #c5523f; }

/* paint */
.paint { flex: 1; min-height: 0; display: flex; flex-direction: column; background: #c0c0c0; font-family: "Liberation Sans", sans-serif; }
.menubar { height: 15px; flex: none; display: flex; align-items: center; padding-left: 5px; font-size: 10px; color: #444; }
.menubar span { margin-right: 7.400px; }
.workspace { flex: none; height: 465px; display: flex; border-bottom: 2px solid #555; }
.toolbox { width: 49px; flex: none; padding: 2px 0 0 4px; border-right: 2px solid #666; background: #c0c0c0; }
.tools { display: grid; grid-template-columns: 20px 20px; grid-auto-rows: 20px; width: 40px; }
.tool { border: 1px solid; border-color: #e6e6e6 #666 #666 #e6e6e6; display: flex; align-items: center; justify-content: center; background: #c4c4c4; }
.tool svg { width: 15px; height: 15px; }
.tool-sunk { border-color: #333 #eee #eee #333; }
.tool-on { background: #ececec; border-color: #333 #eee #eee #333; font-family: "Liberation Serif", serif; font-weight: 700; font-size: 14px; color: #111; }
.dash { fill: none; stroke: #555; stroke-dasharray: 1.500 1; }
.ol { fill: none; stroke: #333; stroke-width: 1; }
.options { margin: 3px 0 0 4px; width: 33px; height: 53px; border: 1px solid; border-color: #888 #eee #eee #888; padding: 1px; }
.opt { height: 24px; padding: 0 1px; }
.opt svg { width: 100%; height: 100%; }
.opt-sel { background: #000080; height: 23px; margin-bottom: 2px; }

.canvas-wrap { flex: 1; min-width: 0; display: flex; flex-direction: column; padding-top: 2px; }
.canvas-row { flex: 1; min-height: 0; background: #c0c0c0; border-top: 2px solid #666; border-right: 3px solid #666; }
.canvas { position: relative; height: 100%; background: #fff; font-family: "Liberation Sans", sans-serif; font-size: 13px; color: #333; overflow: hidden; }
.sk { position: absolute; border: 1px solid #4a4a4a; border-radius: 7px; line-height: 16px; }
.sk-text { position: absolute; line-height: 16px; white-space: nowrap; }
.card-login { left: 107px; top: 15px; width: 293px; height: 419px; }
.logo { left: 221px; top: 25px; width: 60px; height: 60px; border-radius: 50%; border-color: #666; padding: 16px 0 0 7px; }
.f-user { left: 155px; top: 123px; width: 184px; height: 29px; padding: 3px 0 0 6px; }
.f-pass { left: 156px; top: 169px; width: 184px; height: 31px; padding: 1px 0 0 5px; }
.f-login { left: 197px; top: 244px; width: 96px; height: 39px; padding: 3px 0 0 9px; }
.t-note { left: 135px; top: 291px; font-size: 12.800px; }
.t-note span { text-decoration: underline; }
.speck { position: absolute; left: 267px; top: 367px; width: 1px; height: 1px; background: #666; }
.card-reg { left: 448px; top: 19px; width: 296px; height: 408px; }
.t-reg { left: 566px; top: 50px; }
.r1 { left: 502px; top: 101px; width: 195px; height: 28px; }
.r2 { left: 505px; top: 144px; width: 192px; height: 28px; }
.r3 { left: 508px; top: 186px; width: 191px; height: 28px; }
.r4 { left: 511px; top: 227px; width: 187px; height: 33px; }
.r-submit { left: 551px; top: 302px; width: 109px; height: 30px; padding: 3px 0 0 16px; }
.card-dash { left: 779px; top: 20px; width: 187px; height: 413px; }
.t-dash { left: 794px; top: 101px; font-size: 12.800px; }
.cross { position: absolute; left: 831px; top: 238px; width: 17px; height: 17px; }
.handle { position: absolute; width: 2px; height: 2px; background: #222; }
.h-top { left: 488px; top: 0; }
.h-left { left: 0; top: 230px; }
.h-right { right: 0; top: 230px; }

.hscroll { height: 10px; flex: none; background: #cfcfcf; display: flex; }
.vscroll { width: 14px; flex: none; background: #c8c8c8; border-left: 1px solid #aaa; padding-top: 4px; }
.arrow-btn { display: block; background: #c0c0c0; border: 1px solid; border-color: #eee #666 #666 #eee; font-size: 8px; line-height: 9px; text-align: center; color: #111; width: 11px; height: 11px; overflow: hidden; }
.palette { height: 40px; flex: none; display: flex; align-items: flex-start; padding: 8px 0 0 3px; border-bottom: 1px solid #888; }
.current { position: relative; width: 23px; height: 25px; background: #e8e8e8; border: 1px solid; border-color: #777 #eee #eee #777; }
.cur-fg, .cur-bg { position: absolute; display: block; }
.cur-bg { left: 8px; top: 8px; width: 12px; height: 12px; background: #fff; box-shadow: -1px -1px 0 #888; }
.cur-fg { left: 3px; top: 3px; width: 10px; height: 10px; background: #000; box-shadow: 0 0 0 1px #eee; }
.swatches { margin: -1px 0 0 2px; display: grid; grid-template-columns: repeat(14, 12.900px); grid-auto-rows: 13px; background: #f0f0f0; }
.swatches i { display: block; border: 1px solid; border-color: #666 #eee #eee #666; }
.k000 { background: #000; } .k808 { background: #808080; } .k800 { background: #800000; } .k880 { background: #808000; }
.k080 { background: #008000; } .k088 { background: #008080; } .k008 { background: #000080; } .k818 { background: #800080; }
.k884 { background: #808040; } .k044 { background: #004040; } .k08f { background: #0080ff; } .k048 { background: #004080; }
.k40f { background: #4000ff; } .k840 { background: #804000; } .kfff { background: #fff; } .kccc { background: #c0c0c0; }
.kf00 { background: #ff0000; } .kff0 { background: #ffff00; } .k0f0 { background: #00ff00; } .k0ff { background: #00ffff; }
.k00f { background: #0000ff; } .kf0f { background: #ff00ff; } .kff8 { background: #ffff80; } .k0f8 { background: #00ff80; }
.k8ff { background: #80ffff; } .k88f { background: #8080ff; } .kf08 { background: #ff0080; } .kf84 { background: #ff8040; }
.status { flex: 1; display: flex; align-items: center; font-size: 9.700px; color: #444; border-top: 1px solid #eee; }
.st-help { width: 853px; padding-left: 1px; }
.st-pos, .st-size { height: 100%; display: flex; align-items: center; padding-left: 4px; border: 1px solid; border-color: #888 #eee #eee #888; }
.st-pos { width: 93px; margin-right: 1px; }
.st-size { flex: 1; }

/* bottom bar */
.bottombar { flex: 1; display: grid; grid-template-columns: 522px auto 1fr; align-items: center; padding-top: 1px; color: #fff; }
.meeting-code { padding-left: 25px; font-family: Inter, Roboto, sans-serif; font-size: 15px; font-weight: 600; }
.controls { display: flex; gap: 12px; }
.ctl { width: 40px; height: 40px; padding: 0; border: 0; border-radius: 20px; background: #3c4043; display: flex; align-items: center; justify-content: center; }
.ctl svg { width: 20px; height: 20px; fill: #fff; }
.ctl-red { background: #ea4335; }
.ctl-end { width: 56px; }
.ctl-end svg { width: 24px; height: 24px; }
.side-icons { justify-self: end; display: flex; gap: 24px; padding-right: 30px; }
.side-icons svg { width: 24px; height: 24px; fill: #fff; }

.selfview { position: absolute; left: 1099px; top: 540px; width: 234px; height: 132px; background: #474a4d; border-radius: 8px; display: flex; align-items: center; justify-content: center; box-shadow: 0 1px 6px rgba(0,0,0,.25); }
.self-avatar { width: 71px; height: 71px; border-radius: 50%; background: #5c6bc0; color: #fff; font-size: 36px; display: flex; align-items: center; justify-content: center; }
.self-mic { position: absolute; right: 8px; top: 8px; width: 26px; height: 26px; padding: 0; border: 0; border-radius: 50%; background: #3c4043; display: flex; align-items: center; justify-content: center; }
.self-mic svg { width: 16px; height: 16px; fill: #fff; }
.self-name { position: absolute; left: 11px; bottom: 14px; color: #fff; font-size: 13px; font-weight: 700; }

.activate { position: absolute; left: 1054px; top: 688px; color: #8b8c8e; font-family: "Open Sans", sans-serif; white-space: nowrap; pointer-events: none; }
.act-title { font-size: 19.200px; line-height: 25px; }
.act-sub { font-size: 14.400px; line-height: 20px; }
.badge { position: absolute; left: 1228px; top: 699px; width: 20px; height: 20px; border-radius: 50%; background: #5f6368; color: #fff; font-size: 10px; font-weight: 700; display: flex; align-items: center; justify-content: center; }
```
